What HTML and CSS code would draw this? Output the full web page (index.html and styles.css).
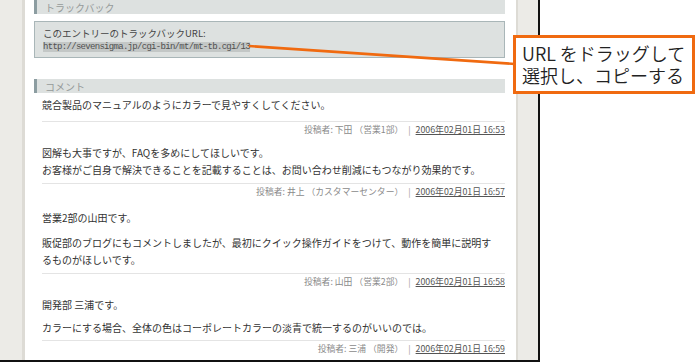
FILE: index.html
```html
<!DOCTYPE html>
<html lang="ja">
<head>
<meta charset="utf-8">
<link rel="stylesheet" href="styles.css">
</head>
<body>
<div class="stage">
  <div class="frame">
    <div class="rail-left"></div>
    <main class="content">
      <h2 class="sec-head">トラックバック</h2>
      <div class="tb-box">
        <div>このエントリーのトラックバックURL:</div>
        <div><span class="tb-url">http://sevensigma.jp/cgi-bin/mt/mt-tb.cgi/13</span></div>
      </div>

      <h2 class="sec-head sec-comments">コメント</h2>

      <div class="comment c1">
        <div class="body">
          <p>競合製品のマニュアルのようにカラーで見やすくしてください。</p>
        </div>
        <div class="meta">投稿者: 下田 （営業1部） <span class="sep">|</span> <a class="date">2006年02月01日 16:53</a></div>
      </div>

      <div class="comment c2">
        <div class="body">
          <p>図解も大事ですが、FAQを多めにしてほしいです。<br>お客様がご自身で解決できることを記載することは、お問い合わせ削減にもつながり効果的です。</p>
        </div>
        <div class="meta">投稿者: 井上 （カスタマーセンター） <span class="sep">|</span> <a class="date">2006年02月01日 16:57</a></div>
      </div>

      <div class="comment c3">
        <div class="body">
          <p>営業2部の山田です。</p>
          <p>販促部のブログにもコメントしましたが、最初にクイック操作ガイドをつけて、動作を簡単に説明す<br>るものがほしいです。</p>
        </div>
        <div class="meta">投稿者: 山田 （営業2部） <span class="sep">|</span> <a class="date">2006年02月01日 16:58</a></div>
      </div>

      <div class="comment c4">
        <div class="body">
          <p>開発部 三浦です。</p>
          <p>カラーにする場合、全体の色はコーポレートカラーの淡青で統一するのがいいのでは。</p>
        </div>
        <div class="meta">投稿者: 三浦 （開発） <span class="sep">|</span> <a class="date">2006年02月01日 16:59</a></div>
      </div>
    </main>
    <div class="rail-right"></div>
  </div>

  <svg class="leader" width="698" height="362" viewBox="0 0 698 362" aria-hidden="true">
    <line x1="249" y1="46" x2="515" y2="64" stroke="#f06a10" stroke-width="2.6"/>
  </svg>
  <div class="callout">URL をドラッグして<br>選択し、コピーする</div>
</div>
</body>
</html>
```
FILE: styles.css
```css
* { box-sizing: border-box; }
html, body { margin: 0; padding: 0; background: #fff; }
body {
  width: 698px;
  height: 362px;
  overflow: hidden;
  font-family: "Noto Sans CJK JP", "Noto Sans", sans-serif;
  color: #333;
}
.stage { position: relative; width: 698px; height: 362px; }

.frame {
  display: flex;
  width: 540px;
  height: 362px;
  border-right: 2px solid #111;
  border-bottom: 2px solid #111;
  overflow: hidden;
}
.rail-left {
  width: 25px;
  flex: none;
  background: #ecebe7;
  border-right: 3px solid #dddbd5;
}
.rail-right {
  width: 22px;
  flex: none;
  background: #ecebe7;
  border-left: 2px solid #dddbd5;
}
.content {
  flex: 1;
  background: #fff;
  padding: 0 11px 0 9px;
}

.sec-head {
  margin: 0;
  height: 14px;
  line-height: 15px;
  font-size: 10px;
  font-weight: normal;
  color: #959a9a;
  background: #dde1e0;
  border-left: 3px solid #8c9da1;
  padding-left: 8px;
}
.sec-comments { margin-top: 21px; }

.tb-box {
  margin-top: 7px;
  height: 37px;
  border: 1px solid #a9b6b8;
  background: #dde1e0;
  padding: 5px 8px 0 8px;
  font-size: 9.5px;
  line-height: 12px;
  color: #444;
}
.tb-url {
  background: #c3c7c6;
  font-family: "Liberation Mono", monospace;
  font-size: 9px;
  letter-spacing: -0.7px;
  color: #505050;
}

.comment { padding: 0 0 0 8px; }
.comment p {
  margin: 0;
  font-size: 10px;
  line-height: 17px;
  color: #333;
}
.c1 { padding-top: 3px; }
.c2 { padding-top: 8px; }
.c3 { padding-top: 11px; }
.c4 { padding-top: 8px; }
.c3 .body p + p { margin-top: 8px; }
.c4 .body p + p { margin-top: 6px; }
.c1 .body { padding-bottom: 8px; }
.c2 .body { padding-bottom: 5px; }
.c3 .body { padding-bottom: 5px; }
.c4 .body { padding-bottom: 4px; }

.meta {
  border-top: 1px solid #e4e4e4;
  text-align: right;
  font-size: 8.8px;
  line-height: 13px;
  padding-top: 1px;
  color: #8a8a8a;
}
.meta .sep { margin: 0 3px; color: #999; }
.meta .date { color: #555; text-decoration: underline; }

.leader { position: absolute; left: 0; top: 0; pointer-events: none; }
.callout {
  position: absolute;
  left: 513px;
  top: 35px;
  width: 182px;
  height: 59px;
  border: 3px solid #f06a10;
  background: #fff;
  padding: 4px 0 0 6px;
  font-family: "Noto Sans CJK JP", sans-serif;
  font-weight: 350;
  font-size: 18px;
  line-height: 22px;
  color: #222;
  white-space: nowrap;
}
```
